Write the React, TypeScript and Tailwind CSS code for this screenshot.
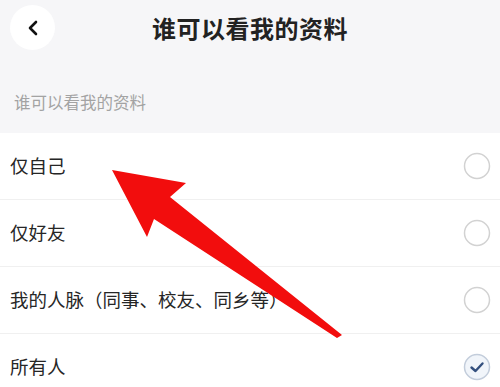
import React from 'react';

const options = [
  { label: '仅自己', checked: false },
  { label: '仅好友', checked: false },
  { label: '我的人脉（同事、校友、同乡等）', checked: false },
  { label: '所有人', checked: true },
];

const Radio = ({ checked }: { checked: boolean }) =>
  checked ? (
    <svg width="28" height="28" viewBox="0 0 28 28">
      <circle cx="14" cy="14" r="12.5" fill="#f1f5fa" stroke="#c3cddb" strokeWidth="1.5" />
      <path d="M8.5 14.5 L12.5 18 L19.5 10.5" fill="none" stroke="#34507e" strokeWidth="2.4" strokeLinecap="round" strokeLinejoin="round" />
    </svg>
  ) : (
    <svg width="28" height="28" viewBox="0 0 28 28">
      <circle cx="14" cy="14" r="12.5" fill="#fff" stroke="#d2d2d2" strokeWidth="1.5" />
    </svg>
  );

export default function App() {
  return (
    <div
      className="relative w-[500px] h-[387px] overflow-hidden bg-[#f6f6f8]"
      style={{ fontFamily: '"Noto Sans CJK SC", "Noto Sans", sans-serif' }}
    >
      {/* Header */}
      <div className="relative h-[56px] flex items-center justify-center">
        <button className="absolute left-[10px] top-[5px] w-[45px] h-[45px] rounded-full bg-white flex items-center justify-center">
          <svg width="14" height="16" viewBox="0 0 14 16">
            <path d="M10 2 L4 8 L10 14" fill="none" stroke="#111" strokeWidth="2.6" strokeLinecap="round" strokeLinejoin="round" />
          </svg>
        </button>
        <h1 className="text-[24px] font-bold text-[#222] tracking-[0.5px]">谁可以看我的资料</h1>
      </div>

      {/* Section label */}
      <div className="h-[77px] pt-[36px] px-[14px]">
        <p className="text-[16.5px] leading-[20px] text-[#a3a3a3]">谁可以看我的资料</p>
      </div>

      {/* Options */}
      <div className="bg-white">
        {options.map((o, i) => (
          <div
            key={i}
            className="h-[67px] flex items-center justify-between pl-[10px] pr-[9px] border-b border-[#f0f0f0]"
          >
            <span className="text-[18.5px] text-[#262626]">{o.label}</span>
            <Radio checked={o.checked} />
          </div>
        ))}
      </div>

      {/* Red annotation arrow */}
      <svg className="absolute left-0 top-0 pointer-events-none" width="500" height="387" viewBox="0 0 500 387">
        <polygon
          points="112,170 186,183 170,197 342,335 337,338 154,219 147,237"
          fill="#f20d0d"
        />
      </svg>
    </div>
  );
}
